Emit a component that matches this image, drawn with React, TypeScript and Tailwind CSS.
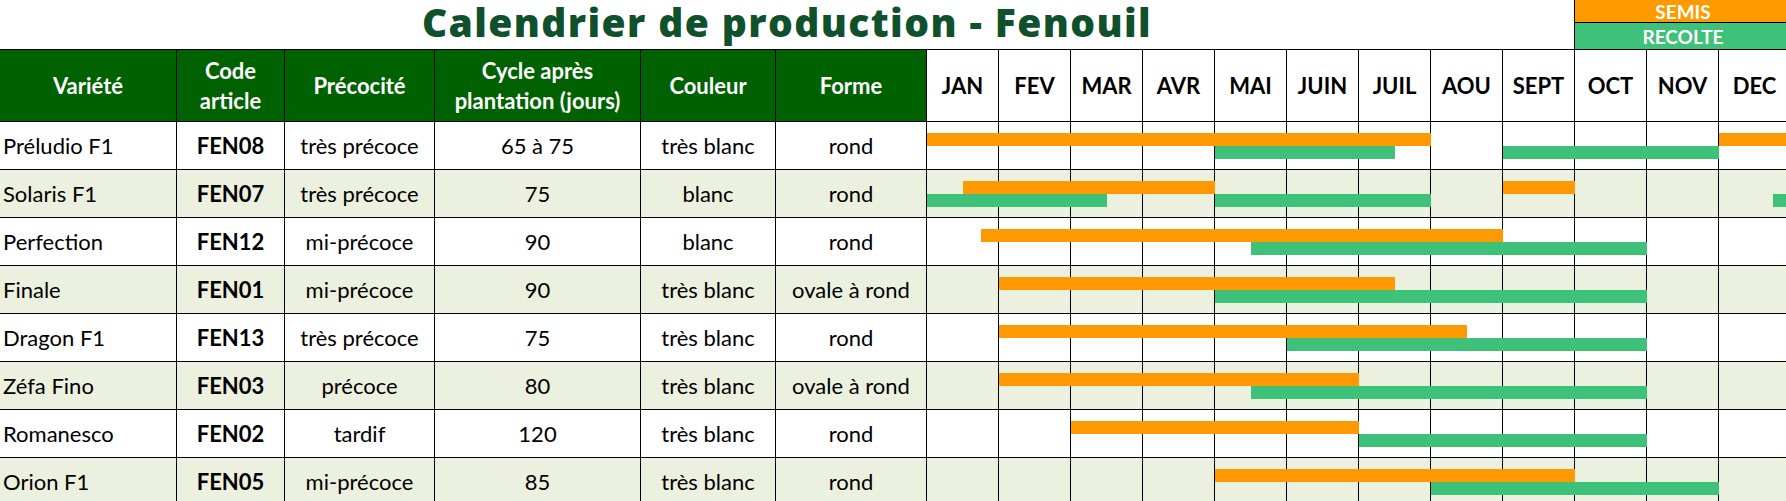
import React from 'react';

type Span = [number, number];

interface Variety {
  name: string;
  code: string;
  precocite: string;
  cycle: string;
  couleur: string;
  forme: string;
  semis: Span[];
  recolte: Span[];
}

const MONTHS = ['JAN', 'FEV', 'MAR', 'AVR', 'MAI', 'JUIN', 'JUIL', 'AOU', 'SEPT', 'OCT', 'NOV', 'DEC'];

const VARIETIES: Variety[] = [
  { name: 'Préludio F1', code: 'FEN08', precocite: 'très précoce', cycle: '65 à 75', couleur: 'très blanc', forme: 'rond', semis: [[0, 7], [11, 12.2]], recolte: [[4, 6.5], [8, 11]] },
  { name: 'Solaris F1', code: 'FEN07', precocite: 'très précoce', cycle: '75', couleur: 'blanc', forme: 'rond', semis: [[0.5, 4], [8, 9]], recolte: [[0, 2.5], [4, 7], [11.75, 12.2]] },
  { name: 'Perfection', code: 'FEN12', precocite: 'mi-précoce', cycle: '90', couleur: 'blanc', forme: 'rond', semis: [[0.75, 8]], recolte: [[4.5, 10]] },
  { name: 'Finale', code: 'FEN01', precocite: 'mi-précoce', cycle: '90', couleur: 'très blanc', forme: 'ovale à rond', semis: [[1, 6.5]], recolte: [[4, 10]] },
  { name: 'Dragon F1', code: 'FEN13', precocite: 'très précoce', cycle: '75', couleur: 'très blanc', forme: 'rond', semis: [[1, 7.5]], recolte: [[5, 10]] },
  { name: 'Zéfa Fino', code: 'FEN03', precocite: 'précoce', cycle: '80', couleur: 'très blanc', forme: 'ovale à rond', semis: [[1, 6]], recolte: [[4.5, 10]] },
  { name: 'Romanesco', code: 'FEN02', precocite: 'tardif', cycle: '120', couleur: 'très blanc', forme: 'rond', semis: [[2, 6]], recolte: [[6, 10]] },
  { name: 'Orion F1', code: 'FEN05', precocite: 'mi-précoce', cycle: '85', couleur: 'très blanc', forme: 'rond', semis: [[4, 9]], recolte: [[7, 11]] },
];

const MONTH_W = 72;

const HeaderCell: React.FC<{ className: string; children: React.ReactNode }> = ({ className, children }) => (
  <div className={`${className} flex items-center justify-center text-center border-r border-black bg-[#006100] text-white font-bold leading-[30px]`}>
    {children}
  </div>
);

const Bar: React.FC<{ span: Span; color: string; top: string }> = ({ span, color, top }) => (
  <div
    className={`absolute h-[13px] ${top} ${color}`}
    style={{ left: span[0] * MONTH_W, width: (span[1] - span[0]) * MONTH_W }}
  />
);

export default function App() {
  return (
    <div className="w-[1786px] h-[501px] overflow-hidden bg-white text-black font-['Lato',sans-serif] text-[22px]">
      <div className="w-[1791px]">
        {/* Title + legend */}
        <div className="flex h-[49px]">
          <div className="w-[1574px] text-center font-['Open_Sans',sans-serif] font-extrabold text-[39px] leading-[44px] tracking-[1.4px] text-[#0e512c] whitespace-nowrap">
            Calendrier de production - Fenouil
          </div>
          <div className="w-[217px] border-l border-black flex flex-col text-white font-bold text-[19px]">
            <div className="h-[23px] bg-[#ff9900] border-b border-black flex items-center justify-center leading-none">SEMIS</div>
            <div className="flex-1 bg-[#3ec178] flex items-center justify-center leading-none">RECOLTE</div>
          </div>
        </div>

        {/* Header */}
        <div className="flex h-[73px] border-y border-black">
          <HeaderCell className="w-[177px]">Variété</HeaderCell>
          <HeaderCell className="w-[108px]">Code<br />article</HeaderCell>
          <HeaderCell className="w-[150px]">Précocité</HeaderCell>
          <HeaderCell className="w-[206px]">Cycle après<br />plantation (jours)</HeaderCell>
          <HeaderCell className="w-[135px]">Couleur</HeaderCell>
          <HeaderCell className="w-[151px]">Forme</HeaderCell>
          {MONTHS.map(m => (
            <div key={m} className="w-[72px] flex items-center justify-center border-r border-black font-bold">
              {m}
            </div>
          ))}
        </div>

        {/* Rows */}
        {VARIETIES.map((v, i) => (
          <div key={v.code} className={`flex h-[48px] border-b border-black ${i % 2 === 1 ? 'bg-[#ebf1de]' : 'bg-white'}`}>
            <div className="w-[177px] flex items-center pl-[3px] border-r border-black">{v.name}</div>
            <div className="w-[108px] flex items-center justify-center border-r border-black font-bold">{v.code}</div>
            <div className="w-[150px] flex items-center justify-center border-r border-black">{v.precocite}</div>
            <div className="w-[206px] flex items-center justify-center border-r border-black">{v.cycle}</div>
            <div className="w-[135px] flex items-center justify-center border-r border-black">{v.couleur}</div>
            <div className="w-[151px] flex items-center justify-center border-r border-black">{v.forme}</div>
            <div className="relative flex w-[864px]">
              {MONTHS.map(m => (
                <div key={m} className="w-[72px] border-r border-black" />
              ))}
              {v.semis.map((s, k) => (
                <Bar key={`s${k}`} span={s} color="bg-[#ff9900]" top="top-[11px]" />
              ))}
              {v.recolte.map((s, k) => (
                <Bar key={`r${k}`} span={s} color="bg-[#3ec178]" top="top-[24px]" />
              ))}
            </div>
          </div>
        ))}
      </div>
    </div>
  );
}
